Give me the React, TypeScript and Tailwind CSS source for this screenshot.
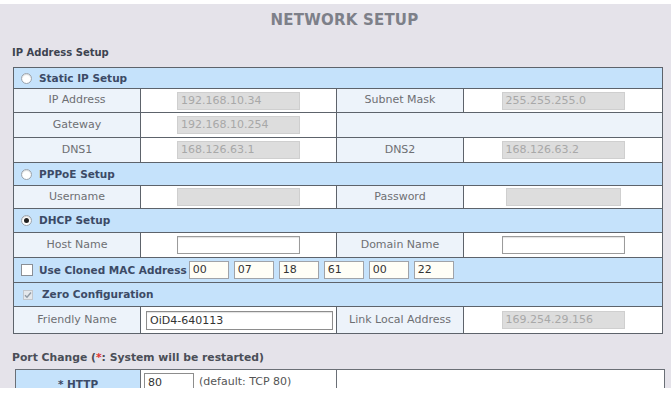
import React from "react";

const HEADER_BG = "bg-[#c5e2fb]";

function Radio({ checked }: { checked?: boolean }) {
  return (
    <span className="inline-flex items-center justify-center w-[11px] h-[11px] rounded-full border border-[#9aa3ad] bg-white shadow-[inset_0_1px_1px_rgba(0,0,0,0.15)]">
      {checked && <span className="w-[5px] h-[5px] rounded-full bg-[#222]" />}
    </span>
  );
}

function Header({ children }: { children: React.ReactNode }) {
  return (
    <span className="text-[10.5px] font-bold text-[#3c4a66] leading-none">{children}</span>
  );
}

function Label({ children, colSpan }: { children?: React.ReactNode; colSpan?: number }) {
  return (
    <td
      colSpan={colSpan}
      className="border border-[#5d636b] bg-[#edf3fa] text-center text-[11px] text-[#6d6f73] p-0"
    >
      {children}
    </td>
  );
}

function DisabledInput({ value, w = "w-[123px]" }: { value?: string; w?: string }) {
  return (
    <div className={`${w} h-[18px] mx-auto bg-[#dddddd] border border-[#cfcfcf] text-left pl-[3px] text-[11px] leading-[16px] text-[#a8a8a8]`}>
      {value}
    </div>
  );
}

function WhiteInput({ value, w = "w-[123px]" }: { value?: string; w?: string }) {
  return (
    <div className={`${w} h-[18px] mx-auto bg-white border border-[#9b9b9b] shadow-[inset_0_1px_1px_rgba(0,0,0,0.12)] text-left pl-[3px] text-[11px] leading-[16px] text-[#333]`}>
      {value}
    </div>
  );
}

function Val({ children }: { children?: React.ReactNode }) {
  return <td className="border border-[#5d636b] bg-white p-0">{children}</td>;
}

export default function App() {
  return (
    <div className="w-[671px] h-[393px] bg-white overflow-hidden font-['DejaVu_Sans','Liberation_Sans',sans-serif]">
      <div className="h-[388px] bg-[#e5e3ea] overflow-hidden border-t-[4px] border-white">
        <div className="h-[32px] pl-[18px] flex items-center justify-center text-[15px] font-bold text-[#7d8089] tracking-[0.2px]">
          NETWORK SETUP
        </div>
        <div className="pl-[12px] pt-[10px] pb-[7px] text-[10px] leading-[14px] font-bold text-[#3d4350]">
          IP Address Setup
        </div>
        <table className="ml-[13px] w-[649px] table-fixed border-collapse border border-[#5d636b]">
          <colgroup>
            <col className="w-[127px]" />
            <col className="w-[196px]" />
            <col className="w-[127px]" />
            <col className="w-[199px]" />
          </colgroup>
          <tbody>
            <tr className="h-[21px]">
              <td colSpan={4} className={`border border-[#5d636b] ${HEADER_BG} p-0 pl-[7px]`}>
                <div className="flex items-center gap-[7px]">
                  <Radio />
                  <Header>Static IP Setup</Header>
                </div>
              </td>
            </tr>
            <tr className="h-[24px]">
              <Label>IP Address</Label>
              <Val><DisabledInput value="192.168.10.34" /></Val>
              <Label>Subnet Mask</Label>
              <Val><DisabledInput value="255.255.255.0" /></Val>
            </tr>
            <tr className="h-[25px]">
              <Label>Gateway</Label>
              <Val><DisabledInput value="192.168.10.254" /></Val>
              <Label colSpan={2} />
            </tr>
            <tr className="h-[25px]">
              <Label>DNS1</Label>
              <Val><DisabledInput value="168.126.63.1" /></Val>
              <Label>DNS2</Label>
              <Val><DisabledInput value="168.126.63.2" /></Val>
            </tr>
            <tr className="h-[23px]">
              <td colSpan={4} className={`border border-[#5d636b] ${HEADER_BG} p-0 pl-[7px]`}>
                <div className="flex items-center gap-[7px]">
                  <Radio />
                  <Header>PPPoE Setup</Header>
                </div>
              </td>
            </tr>
            <tr className="h-[23px]">
              <Label>Username</Label>
              <Val><DisabledInput /></Val>
              <Label>Password</Label>
              <Val><DisabledInput w="w-[115px]" /></Val>
            </tr>
            <tr className="h-[24px]">
              <td colSpan={4} className={`border border-[#5d636b] ${HEADER_BG} p-0 pl-[7px]`}>
                <div className="flex items-center gap-[7px]">
                  <Radio checked />
                  <Header>DHCP Setup</Header>
                </div>
              </td>
            </tr>
            <tr className="h-[25px]">
              <Label>Host Name</Label>
              <Val><WhiteInput /></Val>
              <Label>Domain Name</Label>
              <Val><WhiteInput /></Val>
            </tr>
            <tr className="h-[25px]">
              <td colSpan={4} className={`border border-[#5d636b] ${HEADER_BG} p-0 pl-[7px]`}>
                <div className="flex items-center">
                  <span className="w-[12px] h-[12px] bg-white border border-[#8a8f96] mr-[6px]" />
                  <Header>Use Cloned MAC Address</Header>
                  <div className="flex gap-[5px] ml-[2px]">
                    {["00", "07", "18", "61", "00", "22"].map((v, i) => (
                      <div
                        key={i}
                        className="w-[40px] h-[18px] bg-[#fffef6] border border-[#a0a3a8] pl-[3px] text-[11px] leading-[16px] text-[#333]"
                      >
                        {v}
                      </div>
                    ))}
                  </div>
                </div>
              </td>
            </tr>
            <tr className="h-[24px]">
              <td colSpan={4} className={`border border-[#5d636b] ${HEADER_BG} p-0 pl-[9px]`}>
                <div className="flex items-center">
                  <span className="w-[10px] h-[10px] bg-[#e4e8ec] border border-[#c2c7cd] mr-[9px] flex items-center justify-center">
                    <svg width="8" height="8" viewBox="0 0 8 8">
                      <path d="M1 4.2 L3 6.2 L7 1.5" fill="none" stroke="#8f9aa5" strokeWidth="1.4" />
                    </svg>
                  </span>
                  <Header>Zero Configuration</Header>
                </div>
              </td>
            </tr>
            <tr className="h-[27px]">
              <Label>Friendly Name</Label>
              <Val>
                <div className="ml-[5px] w-[187px] h-[19px] bg-white border border-[#8d8d8d] shadow-[inset_0_1px_1px_rgba(0,0,0,0.12)] pl-[3px] text-[11px] leading-[17px] text-[#333]">
                  OiD4-640113
                </div>
              </Val>
              <Label>Link Local Address</Label>
              <Val><DisabledInput value="169.254.29.156" /></Val>
            </tr>
          </tbody>
        </table>
        <div className="pl-[12px] mt-[17px] mb-[4px] text-[10.8px] leading-[14px] font-bold text-[#4a4e57]">
          Port Change (<span className="text-[#e03030]">*</span>: System will be restarted)
        </div>
        <table className="ml-[15px] w-[649px] table-fixed border-collapse border border-[#6a6f76]">
          <colgroup>
            <col className="w-[125px]" />
            <col className="w-[196px]" />
            <col className="w-[328px]" />
          </colgroup>
          <tbody>
            <tr className="h-[26px]">
              <td className={`border border-[#6a6f76] ${HEADER_BG} text-center p-0`}>
                <span className="text-[10.5px] font-bold text-[#3c4a66]">* HTTP</span>
              </td>
              <td className="border border-[#6a6f76] bg-white p-0 pl-[3px]">
                <div className="flex items-center gap-[5px]">
                  <div className="w-[50px] h-[19px] bg-white border border-[#8d8d8d] pl-[3px] text-[11px] leading-[17px] text-[#333]">
                    80
                  </div>
                  <span className="text-[11px] text-[#555]">(default: TCP 80)</span>
                </div>
              </td>
              <td className="border border-[#6a6f76] bg-white p-0" />
            </tr>
          </tbody>
        </table>
      </div>
    </div>
  );
}
